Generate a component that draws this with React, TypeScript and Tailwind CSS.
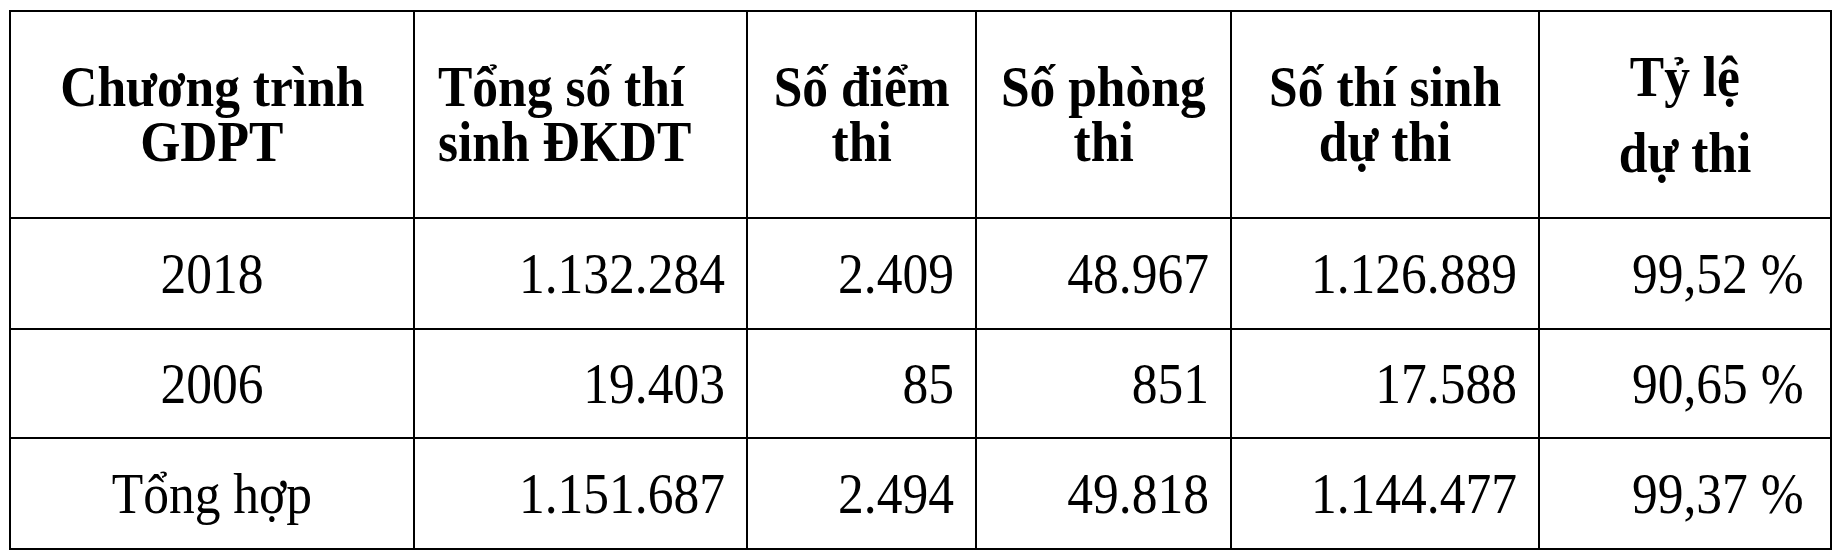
const header = [
  { lines: ["Chương trình", "GDPT"], align: "text-center", origin: "origin-center" },
  { lines: ["Tổng số thí", "sinh ĐKDT"], align: "text-left pl-[23px]", origin: "origin-left" },
  { lines: ["Số điểm", "thi"], align: "text-center", origin: "origin-center" },
  { lines: ["Số phòng", "thi"], align: "text-center", origin: "origin-center" },
  { lines: ["Số thí sinh", "dự thi"], align: "text-center", origin: "origin-center" },
];

const rows = [
  ["2018", "1.132.284", "2.409", "48.967", "1.126.889", "99,52 %"],
  ["2006", "19.403", "85", "851", "17.588", "90,65 %"],
  ["Tổng hợp", "1.151.687", "2.494", "49.818", "1.144.477", "99,37 %"],
];

const widths = ["w-[404px]", "w-[333px]", "w-[229px]", "w-[255px]", "w-[308px]", "w-[292px]"];

export default function App() {
  return (
    <div className="min-h-screen bg-white pl-[9px] pt-[10px] font-['Liberation_Serif','Times_New_Roman',serif] text-black">
      <table className="table-fixed border-collapse border-2 border-black w-[1821px] text-[56px]">
        <colgroup>
          {widths.map((w) => (
            <col key={w} className={w} />
          ))}
        </colgroup>
        <thead>
          <tr className="h-[207px]">
            {header.map((h) => (
              <th
                key={h.lines[0]}
                className={`border-2 border-black font-bold align-middle leading-[55px] ${h.align}`}
              >
                {h.lines.map((l) => (
                  <div key={l}>
                    <span className={`inline-block whitespace-nowrap scale-x-[0.92] ${h.origin}`}>{l}</span>
                  </div>
                ))}
              </th>
            ))}
            <th className="border-2 border-black font-bold align-middle text-center leading-[76px]">
              <div>
                <span className="inline-block whitespace-nowrap scale-x-[0.92]">Tỷ lệ</span>
              </div>
              <div>
                <span className="inline-block whitespace-nowrap scale-x-[0.92]">dự thi</span>
              </div>
            </th>
          </tr>
        </thead>
        <tbody>
          {rows.map((r, i) => (
            <tr key={r[0]} className={i === 1 ? "h-[109px]" : "h-[111px]"}>
              {r.map((v, j) => (
                <td
                  key={j}
                  className={`border-2 border-black align-middle leading-none ${
                    j === 0 ? "text-center" : j === 5 ? "text-right pr-[26px]" : "text-right pr-[21px]"
                  }`}
                >
                  <span
                    className={`inline-block whitespace-nowrap scale-x-[0.92] ${
                      j === 0 ? "origin-center" : "origin-right"
                    }`}
                  >
                    {v}
                  </span>
                </td>
              ))}
            </tr>
          ))}
        </tbody>
      </table>
    </div>
  );
}
